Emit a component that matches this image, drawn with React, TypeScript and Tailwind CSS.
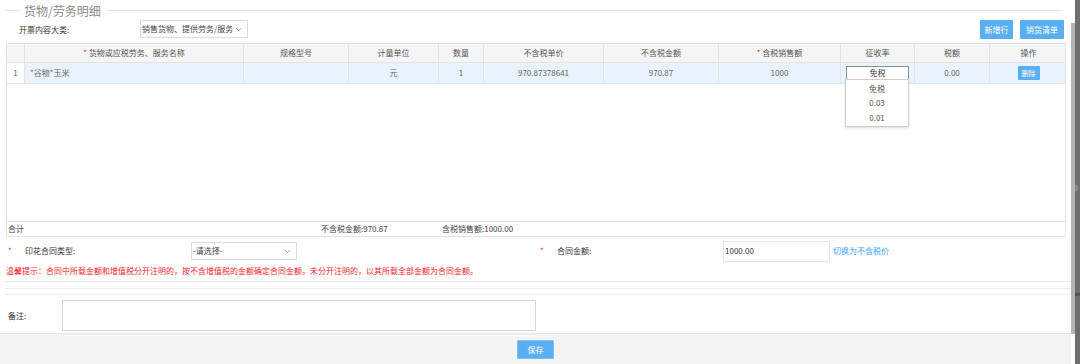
import { ChevronDown } from 'lucide-react'

const font = { fontFamily: '"Noto Sans CJK SC", "Noto Sans", sans-serif' }

const cols = [
  { w: 'w-[18px]', label: '' },
  { w: 'w-[219px]', label: '货物或应税劳务、服务名称', star: true },
  { w: 'w-[105px]', label: '规格型号' },
  { w: 'w-[90px]', label: '计量单位' },
  { w: 'w-[45px]', label: '数量' },
  { w: 'w-[120px]', label: '不含税单价' },
  { w: 'w-[115px]', label: '不含税金额' },
  { w: 'w-[122px]', label: '含税销售额', star: true },
  { w: 'w-[74px]', label: '征收率' },
  { w: 'w-[75px]', label: '税额' },
  { w: 'w-[77px]', label: '操作' },
]

function FakeSelect({ value, className = '' }: { value: string; className?: string }) {
  return (
    <div className={`flex items-center justify-between border border-[#dcdcdc] bg-white pl-[1px] pr-[4px] text-[8px] text-[#444] ${className}`}>
      <span>{value}</span>
      <ChevronDown className="h-[9px] w-[9px] text-[#555]" strokeWidth={1.5} />
    </div>
  )
}

export default function App() {
  return (
    <div className="flex h-[364px] w-[1080px] overflow-hidden bg-white text-[8px] text-[#333]" style={font}>
      <div className="flex w-[1071px] flex-col">
        {/* legend */}
        <div className="flex h-[20px] items-center pt-[1px]">
          <div className="ml-[5px] w-[15px] border-t border-[#e6e6e6]" />
          <span className="ml-[4px] mr-[6px] text-[12px] leading-none text-[#8a8a8a]">货物/劳务明细</span>
          <div className="w-[955px] border-t border-[#e6e6e6]" />
        </div>

        {/* category row */}
        <div className="flex h-[23px] items-start">
          <span className="ml-[19px] mt-[4px] w-[121px]">开票内容大类:</span>
          <FakeSelect value="销售货物、提供劳务/服务" className="h-[18px] w-[108px]" />
          <div className="ml-auto mr-[7px] flex gap-[7px]">
            <button className="h-[19px] w-[33px] rounded-[1px] bg-[#5aaef2] text-[8px] text-white">新增行</button>
            <button className="h-[19px] w-[44px] rounded-[1px] bg-[#5aaef2] text-[8px] text-white">销货清单</button>
          </div>
        </div>

        {/* table */}
        <div className="relative ml-[6px] w-[1060px]">
          <div className="flex h-[179px] flex-col border border-[#e3e3e3]">
            <div className="flex h-[19px] border-b border-[#e3e3e3] bg-[#f5f5f5] text-[#555]">
              {cols.map((c, i) => (
                <div
                  key={i}
                  className={`${c.w} flex shrink-0 items-center justify-center ${i < cols.length - 1 ? 'border-r border-[#e3e3e3]' : ''}`}
                >
                  {c.star && <span className="mr-[2px] text-[#f23]">*</span>}
                  {c.label}
                </div>
              ))}
            </div>
            <div className="flex h-[21px] border-b border-[#dfe6ee] bg-[#e9f3fd] text-[#666]">
              <div className="flex w-[18px] shrink-0 items-center justify-center border-r border-[#e3e3e3] bg-white">1</div>
              <div className="flex w-[219px] shrink-0 items-center border-r border-[#e3e3e3] pl-[5px]">*谷物*玉米</div>
              <div className="w-[105px] shrink-0 border-r border-[#e3e3e3]" />
              <div className="flex w-[90px] shrink-0 items-center justify-center border-r border-[#e3e3e3]">元</div>
              <div className="flex w-[45px] shrink-0 items-center justify-center border-r border-[#e3e3e3]">1</div>
              <div className="flex w-[120px] shrink-0 items-center justify-center border-r border-[#e3e3e3]">970.87378641</div>
              <div className="flex w-[115px] shrink-0 items-center justify-center border-r border-[#e3e3e3]">970.87</div>
              <div className="flex w-[122px] shrink-0 items-center justify-center border-r border-[#e3e3e3]">1000</div>
              <div className="flex w-[74px] shrink-0 items-center justify-center border-r border-[#e3e3e3]">
                <div className="flex h-[14px] w-[63px] items-center justify-center border border-[#8d8d8d] bg-white text-[#444]">免税</div>
              </div>
              <div className="flex w-[75px] shrink-0 items-center justify-center border-r border-[#e3e3e3]">0.00</div>
              <div className="flex w-[77px] shrink-0 items-center justify-center">
                <button className="h-[14px] w-[22px] rounded-[1px] bg-[#5aaef2] text-[7px] text-white">删除</button>
              </div>
            </div>
          </div>

          {/* dropdown */}
          <div className="absolute left-[839px] top-[36px] flex w-[64px] flex-col border border-[#cfcfcf] bg-white text-[#555] shadow-[0_1px_2px_rgba(0,0,0,0.15)]">
            <div className="flex h-[15px] items-center justify-center pt-[2px]">免税</div>
            <div className="flex h-[15px] items-center justify-center">0.03</div>
            <div className="flex h-[16px] items-center justify-center pb-[1px]">0.01</div>
          </div>

          {/* totals */}
          <div className="flex h-[15px] items-center border border-t-0 border-[#e3e3e3] text-[#444]">
            <span className="w-[314px] pl-[1px]">合计</span>
            <span className="w-[121px]">不含税金额:970.87</span>
            <span>含税销售额:1000.00</span>
          </div>
        </div>

        {/* stamp row */}
        <div className="mt-[4px] flex h-[20px] items-center">
          <span className="ml-[8px] w-[17px] text-[#f23]">*</span>
          <span className="w-[166px]">印花合同类型:</span>
          <FakeSelect value="-请选择-" className="h-[18px] w-[106px]" />
          <span className="ml-[243px] w-[17px] text-[#f23]">*</span>
          <span className="w-[166px]">合同金额:</span>
          <div className="flex h-[21px] w-[107px] items-center border border-[#e6e6e6] pl-[1px]">1000.00</div>
          <span className="ml-[3px] text-[#3ba3f7]">切换为不含税价</span>
        </div>

        {/* warning */}
        <div className="ml-[6px] mt-[2px] h-[15px] leading-[15px] text-[#f5252f]">
          温馨提示：合同中所载金额和增值税分开注明的，按不含增值税的金额确定合同金额，未分开注明的，以其所载全部金额为合同金额。
        </div>

        {/* divider lines */}
        <div className="ml-[5px] mt-[3px] flex flex-col">
          <div className="h-[7px] border-t border-[#ececec]" />
          <div className="h-[6px] border-t border-[#ececec]" />
          <div className="border-t border-[#ececec]" />
        </div>

        {/* note */}
        <div className="mt-[5px] flex h-[31px] items-center">
          <span className="ml-[8px] w-[54px]">备注:</span>
          <div className="h-[31px] w-[474px] border border-[#d6d6d6]" />
        </div>

        {/* footer */}
        <div className="mt-[2px] flex flex-1 items-start justify-center border-t border-[#e6e6e6] bg-[#f4f4f4] pt-[6px]">
          <button className="h-[19px] w-[37px] rounded-[1px] border border-[#7cc0f7] bg-[#5aaef2] text-[8px] text-white">保存</button>
        </div>
      </div>

      {/* scrollbars */}
      <div className="flex w-[4px] flex-col bg-white">
        <div className="mt-[23px] h-[311px] bg-[#b4b4b4]" />
      </div>
      <div className="flex w-[5px] flex-col bg-[#6f6f6f]">
        <div className="mt-[185px] h-[6px] w-[3px] bg-[#8a8a8a]" />
        <div className="mt-[102px] h-[3px] bg-[#555]" />
      </div>
    </div>
  )
}
